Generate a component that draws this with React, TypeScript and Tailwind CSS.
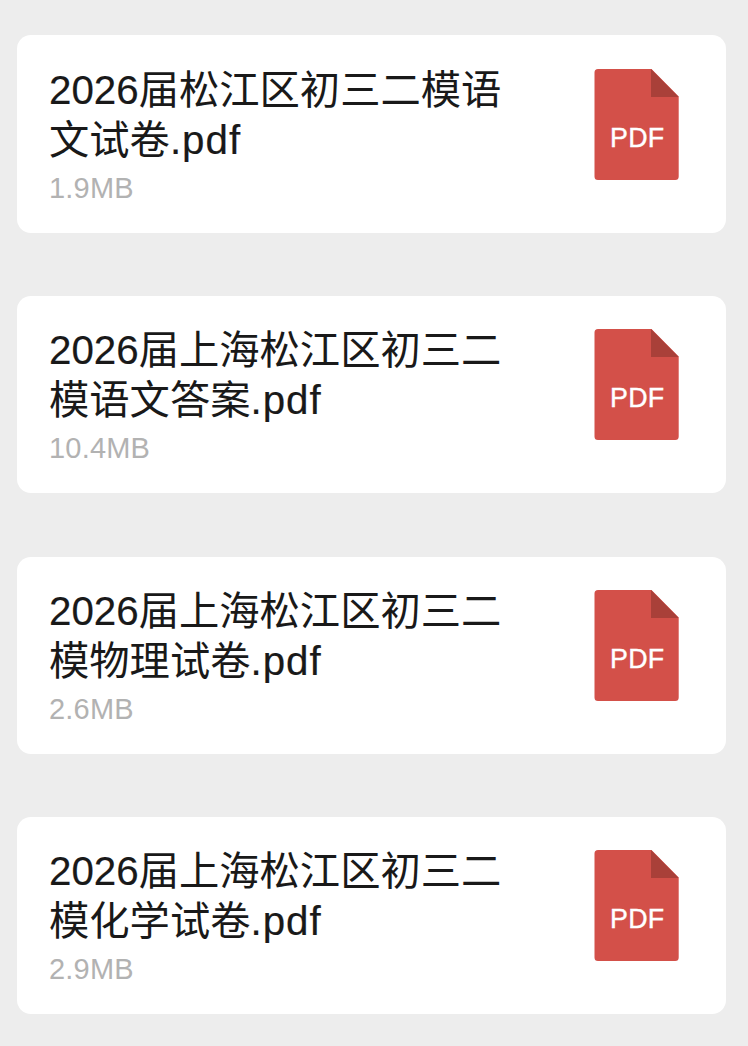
import React from 'react';

interface PdfFile {
  firstLine: string;
  secondLine: string;
  size: string;
}

const files: PdfFile[] = [
  { firstLine: '届松江区初三二模语', secondLine: '文试卷', size: '1.9MB' },
  { firstLine: '届上海松江区初三二', secondLine: '模语文答案', size: '10.4MB' },
  { firstLine: '届上海松江区初三二', secondLine: '模物理试卷', size: '2.6MB' },
  { firstLine: '届上海松江区初三二', secondLine: '模化学试卷', size: '2.9MB' },
];

const PdfIcon: React.FC = () => (
  <svg width="86" height="112" viewBox="0 0 86 112" className="shrink-0">
    <path
      d="M4 0H57.5L84.7 27.5V107.5A3.5 3.5 0 0 1 81.2 111H4A3.5 3.5 0 0 1 .5 107.5V3.5A3.5 3.5 0 0 1 4 0Z"
      fill="#d35049"
    />
    <path d="M57 0L84.7 28H57Z" fill="#a94039" />
    <text
      x="43.3"
      y="78"
      textAnchor="middle"
      fontSize="26.8"
      letterSpacing="0.3"
      fill="#fff"
      stroke="#fff"
      strokeWidth="0.4"
      fontFamily="Liberation Sans, sans-serif"
    >
      PDF
    </text>
  </svg>
);

const FileCard: React.FC<{ file: PdfFile }> = ({ file }) => (
  <div className="flex h-[197px] items-start justify-between rounded-[14px] bg-white pl-8 pr-[46px] pt-[33px] first:h-[198px] first:pt-[34px]">
    <div className="-mt-[3px]">
      <div className="whitespace-nowrap text-[40.3px] leading-[49px] text-[#191919]">
        <div>
          <span className="[-webkit-text-stroke:0.2px_#191919]">2026</span>
          {file.firstLine}
        </div>
        <div className="mt-px">
          {file.secondLine}
          <span className="tracking-[1px] [-webkit-text-stroke:0.2px_#191919]">
            .pdf
          </span>
        </div>
      </div>
      <div className="mt-1.5 text-[29px] leading-[34px] tracking-[0.2px] text-[#b2b2b2]">
        {file.size}
      </div>
    </div>
    <PdfIcon />
  </div>
);

export default function App() {
  return (
    <div className="flex h-[1046px] w-[748px] flex-col gap-[63.33px] bg-[#ededed] pl-[17px] pr-[22px] pt-[35px] font-['Liberation_Sans','Noto_Sans_CJK_SC',sans-serif]">
      {files.map((file) => (
        <FileCard key={file.secondLine} file={file} />
      ))}
    </div>
  );
}
